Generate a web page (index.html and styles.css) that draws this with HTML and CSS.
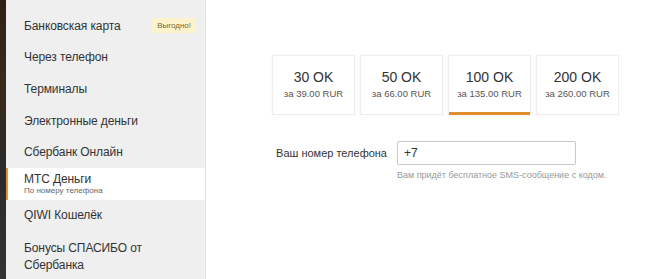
FILE: index.html
```html
<!DOCTYPE html>
<html lang="ru">

<head>
    <meta charset="UTF-8">
    <title>Оплата</title>
    <link rel="stylesheet" href="styles.css">
</head>

<body>
    <div class="strip"></div>

    <ul class="methods">
        <li class="method">Банковская карта <span class="badge">Выгодно!</span></li>
        <li class="method">Через телефон</li>
        <li class="method">Терминалы</li>
        <li class="method">Электронные деньги</li>
        <li class="method">Сбербанк Онлайн</li>
        <li class="method active">
            МТС Деньги
            <span class="method-sub">По номеру телефона</span>
        </li>
        <li class="method">QIWI Кошелёк</li>
        <li class="method tall">Бонусы СПАСИБО от Сбербанка</li>
    </ul>

    <div class="content">
        <div class="packs">
            <div class="pack">
                <div class="pack-amount">30 OK</div>
                <div class="pack-price">за 39.00 RUR</div>
            </div>
            <div class="pack">
                <div class="pack-amount">50 OK</div>
                <div class="pack-price">за 66.00 RUR</div>
            </div>
            <div class="pack selected">
                <div class="pack-amount">100 OK</div>
                <div class="pack-price">за 135.00 RUR</div>
            </div>
            <div class="pack">
                <div class="pack-amount">200 OK</div>
                <div class="pack-price">за 260.00 RUR</div>
            </div>
        </div>

        <div class="phone-form">
            <label for="phone">Ваш номер телефона</label>
            <input type="text" id="phone" value="+7">
            <p class="hint">Вам придёт бесплатное SMS-сообщение с кодом.</p>
        </div>
    </div>
</body>

</html>
```

FILE: styles.css
```css
body {
    margin: 0;
    height: 279px;
    overflow: hidden;
    display: flex;
    font-family: 'Liberation Sans', Arial, sans-serif;
    color: #333;
    background-color: #fff;
}

.strip {
    width: 6px;
    flex-shrink: 0;
    background: linear-gradient(180deg, #2b2118, #3a2a1c 30%, #2a2a2a 60%, #333 100%);
}

.methods {
    list-style: none;
    margin: 0;
    padding: 10px 0 0 0;
    width: 199px;
    flex-shrink: 0;
    background-color: #efefef;
    border-right: 1px solid #e2e2e2;
}

.method {
    display: flex;
    align-items: center;
    height: 31.6px;
    padding: 0 9px 0 18px;
    font-size: 12px;
    letter-spacing: -0.1px;
    color: #333;
}

.method.active {
    flex-direction: column;
    align-items: flex-start;
    justify-content: center;
    padding-left: 16px;
    border-left: 2px solid #e8922d;
    background-color: #fff;
    line-height: 13px;
}

.method.tall {
    align-items: flex-start;
    height: 50px;
    line-height: 17px;
    padding-top: 9px;
    padding-right: 40px;
}

.method-sub {
    font-size: 8px;
    line-height: 9px;
    letter-spacing: 0;
    color: #666;
}

.badge {
    margin-left: auto;
    padding: 3px 5px;
    font-size: 8px;
    letter-spacing: 0;
    color: #7a6a3a;
    background-color: #fcf3cc;
    border-radius: 2px;
}

.content {
    flex: 1;
    padding: 55px 0 0 66px;
}

.packs {
    display: flex;
    gap: 5px;
}

.pack {
    width: 81px;
    height: 58px;
    border: 1px solid #eeeeee;
    box-shadow: 0 0 2px rgba(0, 0, 0, 0.06);
    text-align: center;
    position: relative;
}

.pack.selected::after {
    content: '';
    position: absolute;
    left: 0;
    right: 0;
    bottom: -1px;
    height: 3px;
    background-color: #e08d2b;
}

.pack-amount {
    margin-top: 13px;
    font-size: 14px;
    color: #333;
}

.pack-price {
    margin-top: 3px;
    font-size: 9.5px;
    color: #555;
}

.phone-form {
    display: grid;
    grid-template-columns: 115px 179px;
    column-gap: 10px;
    row-gap: 5px;
    margin-top: 26px;
    align-items: center;
}

.phone-form label {
    justify-self: end;
    white-space: nowrap;
    font-size: 11px;
    color: #333;
}

.phone-form input {
    height: 24px;
    padding: 0 6px;
    box-sizing: border-box;
    border: 1px solid #c8c8c8;
    border-radius: 2px;
    font-family: inherit;
    font-size: 12px;
    color: #333;
}

.hint {
    grid-column: 2;
    margin: 0;
    font-size: 9px;
    color: #999;
    white-space: nowrap;
}
```
